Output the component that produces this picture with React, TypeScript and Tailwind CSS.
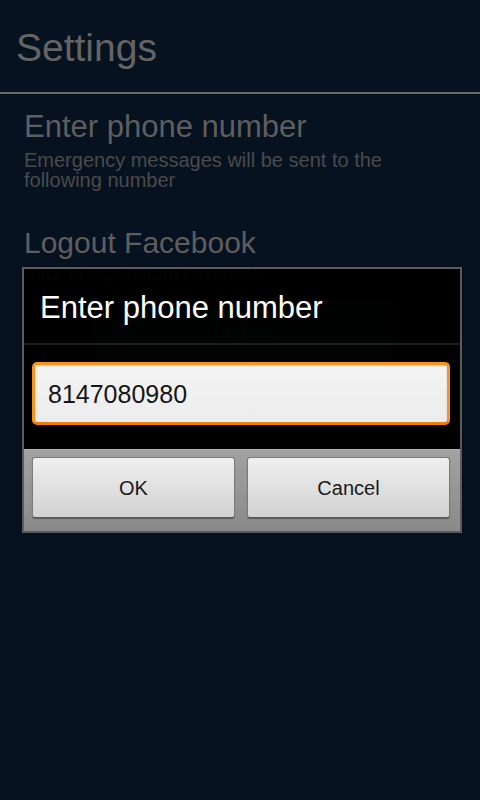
const font = { fontFamily: '"Liberation Sans", Arial, sans-serif' };

const DialogButton = ({ label }: { label: string }) => (
  <button className="w-[203px] h-[61px] rounded-[3px] border border-[#7a7a7a] border-b-[#5a5a5a] bg-gradient-to-b from-[#efefef] to-[#d2d2d2] shadow-[0_1px_1px_rgba(0,0,0,0.35)] text-[20px] leading-[24px] text-[#1a1a1a]">
    {label}
  </button>
);

export default function App() {
  return (
    <div className="relative w-[480px] h-[800px] bg-[#071221] overflow-hidden" style={font}>
      <div className="pl-[16px] pt-[26px] h-[92px]">
        <div className="text-[39px] leading-[44px] text-[#646464]">Settings</div>
      </div>
      <div className="h-[2px] bg-[#6a6a6a]" />

      <div className="px-[24px] pt-[15px]">
        <div className="text-[31px] leading-[36px] text-[#5e5e5e]">Enter phone number</div>
        <div className="mt-[5px] text-[20px] leading-[20px] text-[#4a4a4a] w-[400px]">
          Emergency messages will be sent to the following number
        </div>

        <div className="mt-[35px] text-[30px] leading-[36px] text-[#5e5e5e]">Logout Facebook</div>
        <div className="mt-[3px] text-[18px] leading-[20px] text-[#4a4a4a]">Click to logout from Facebook</div>
        <div className="mt-[18px] ml-[71px] w-[298px] h-[58px] rounded-[3px] bg-[#1c3a28] flex items-center justify-center text-[20px] text-[#555]">
          Logout
        </div>
      </div>

      {/* dialog */}
      <div className="absolute left-[22px] top-[267px] w-[440px] h-[266px] border-2 border-[#5c5c5c] bg-black/[0.95] flex flex-col shadow-[0_0_6px_rgba(0,0,0,0.4)]">
        <div className="h-[74px] pt-[21px] pl-[16px]">
          <div className="text-[31px] leading-[36px] text-white">Enter phone number</div>
        </div>
        <div className="h-[2px] bg-[#1e1e1e]" />
        <div className="pt-[17px] pb-[24px] pl-[8px]">
          <div className="w-[418px] h-[63px] rounded-[5px] border-[3px] border-[#f7931e] border-b-[#f07c0a] bg-gradient-to-b from-[#f4f4f4] to-[#ececec] flex items-center pl-[13px] shadow-[inset_0_1px_2px_rgba(0,0,0,0.15)]">
            <span className="text-[25px] leading-[30px] text-[#151515]">8147080980</span>
          </div>
        </div>
        <div className="flex-1 bg-gradient-to-b from-[#a2a2a2] to-[#8a8a8a] border-t border-[#b0b0b0] pt-[7px] pl-[8px] flex gap-[12px] items-start">
          <DialogButton label="OK" />
          <DialogButton label="Cancel" />
        </div>
      </div>
    </div>
  );
}
